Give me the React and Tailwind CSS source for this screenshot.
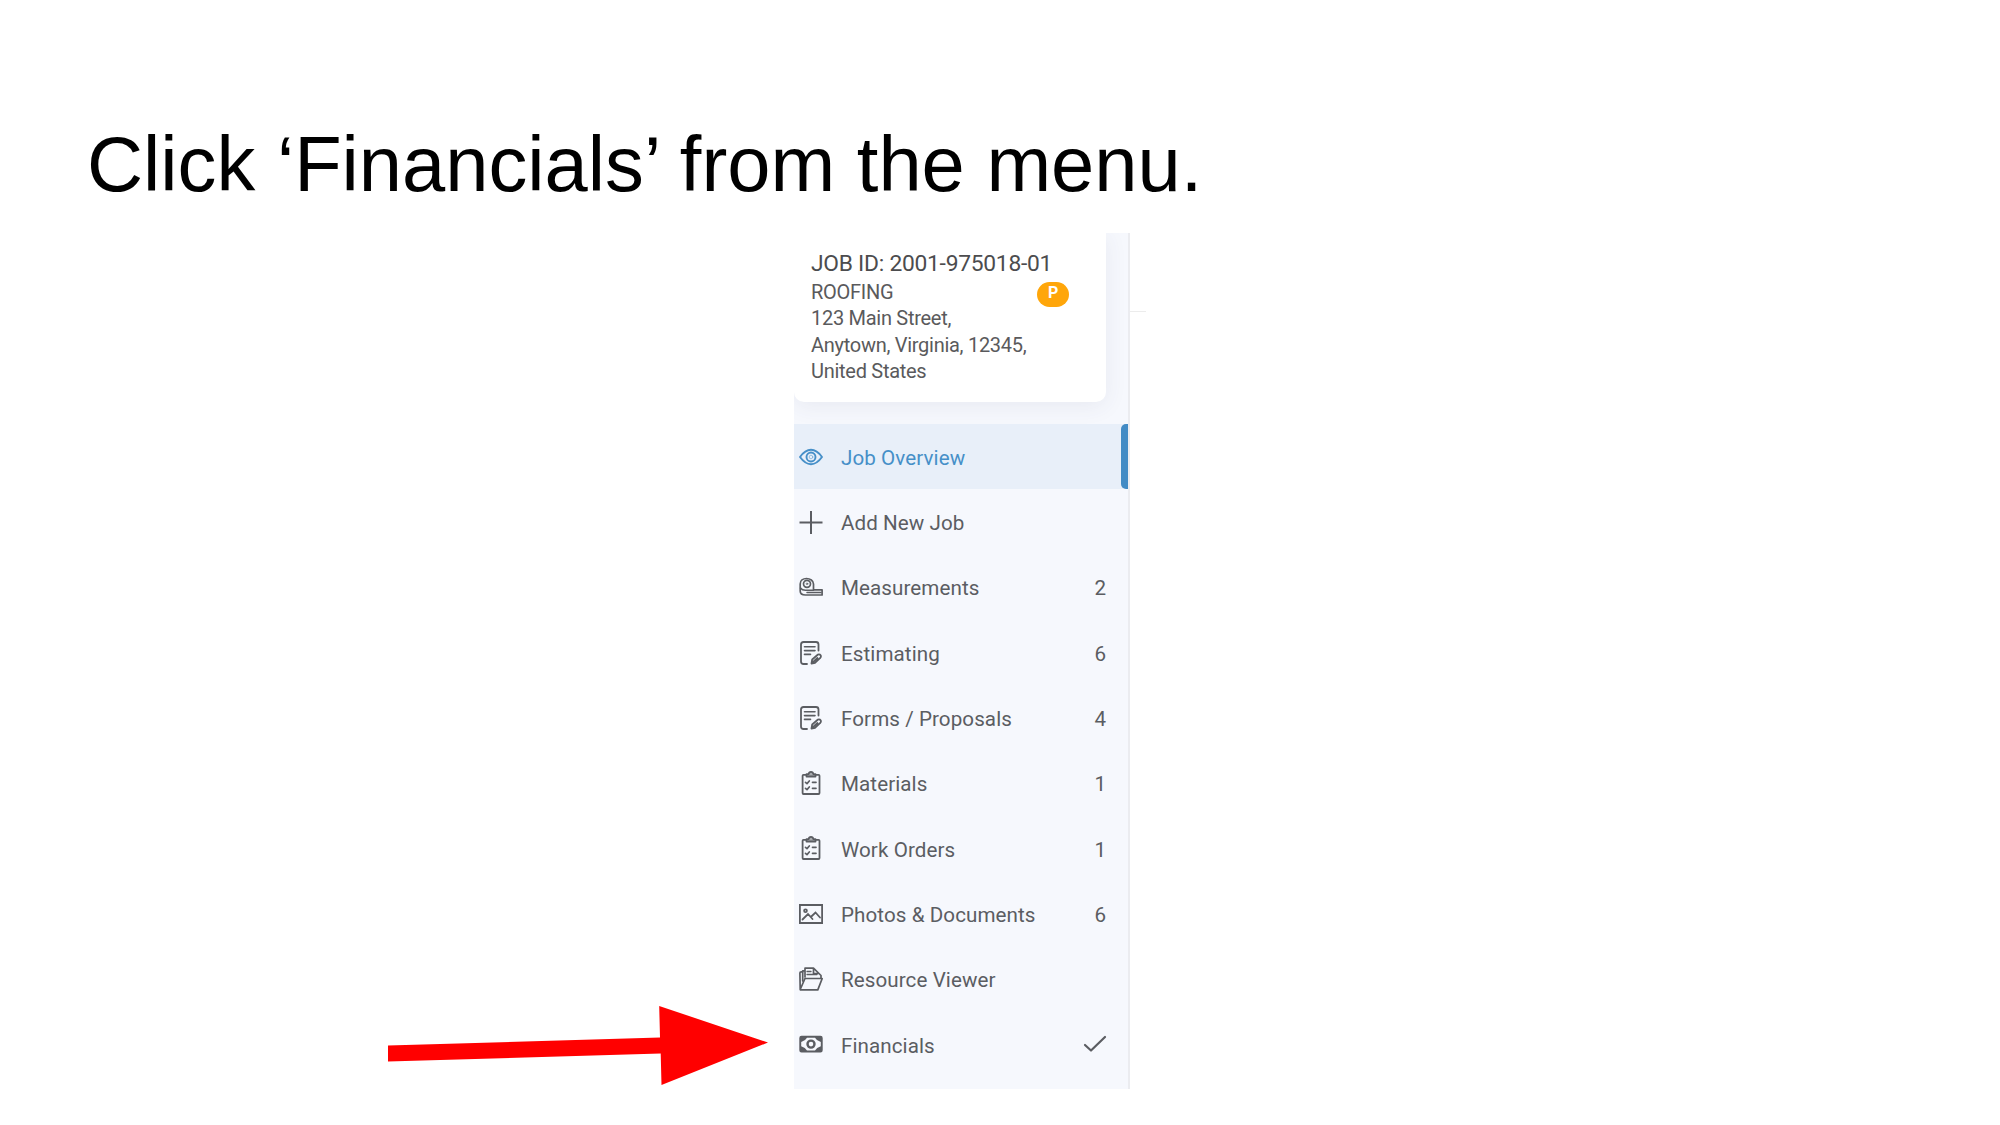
const stroke = { fill: "none", stroke: "currentColor", strokeWidth: 1.7, strokeLinecap: "round", strokeLinejoin: "round" };

function Icon({ children, ...rest }) {
  return (
    <svg viewBox="0 0 24 24" className="h-6 w-6 shrink-0" {...stroke} {...rest}>
      {children}
    </svg>
  );
}

const Eye = () => (
  <Icon strokeWidth="1.900">
    <path d="M1 12Q6.200 4.800 12 4.800T23 12Q17.800 19.200 12 19.200T1 12Z" />
    <circle cx="12" cy="12" r="4.500" />
    <circle cx="12" cy="12" r="1.800" strokeWidth=".8" strokeOpacity=".6" />
  </Icon>
);

const Plus = () => (
  <Icon strokeWidth="2" strokeLinecap="butt">
    <path d="M12 1v23M.5 12.500h23" />
  </Icon>
);

const Tape = () => (
  <Icon>
    <path d="M1.200 13.500V9C1.200 5.500 4 3.500 7.500 3.500S14.500 5.500 14.500 9v5.800h8.600V20H6.500C3.500 20 1.200 18.500 1.200 16Z" />
    <circle cx="8" cy="8.800" r="3.500" />
    <circle cx="8" cy="8.800" r=".8" strokeWidth=".8" />
    <path d="M1.500 13q1.500 2.200 5 2.200H14.500M8 17.500h14" strokeWidth="1.500" />
  </Icon>
);

const FormEdit = () => (
  <Icon strokeWidth="1.800">
    <path d="M8 23H4.500Q2 23 2 20.500V3.500Q2 1 4.500 1H17Q19.500 1 19.500 3.500V9.500" />
    <path d="M5.500 5.800H16M5.500 9.600H16M5.500 13.400H11.500" strokeWidth="1.600" />
    <path d="M12.500 22.500L13.200 18.500L19 13.500Q20.800 13 21.800 14.400Q22.500 16 21 17.200L16 21.800ZM13 22L18.500 17" />
  </Icon>
);

const Clipboard = () => (
  <Icon strokeWidth="1.800">
    <path d="M7 3.800H4.500Q3.600 3.800 3.600 4.700V22Q3.600 23 4.500 23H19.500Q20.500 23 20.500 22V4.700Q20.500 3.800 19.500 3.800H17" />
    <path d="M7.500 5.500V3.200H9.500Q10 .9 12 .9T14.500 3.200H16.500V5.500Z" fill="currentColor" fillOpacity=".5" />
    <path d="M6.500 11.300l1.500 1.300 2.300-2.600M13.500 11.300h3.500M6.500 17.300l1.500 1.300 2.300-2.600M13.500 17.300h3.500" strokeWidth="1.700" />
  </Icon>
);

const Photo = () => (
  <Icon strokeLinejoin="miter" strokeWidth="1.800">
    <path d="M.9 3H23.100V21H.9Z" />
    <circle cx="6.500" cy="8.800" r="1.400" />
    <path d="M3.500 17.500L9 12L13.500 17M11.800 15L16.500 10.500L21 15.500" />
  </Icon>
);

const Folder = () => (
  <Icon>
    <path d="M1.200 22.500L.9 6Q.9 4.800 2.200 4.800H3.500M1.200 22.500L6 11.500H23.200L18.800 22.900H1.500" />
    <path d="M3.700 14V3.800H6V1.200H14.500L22 8.500V11M14.500 1.200V6.500H19.500M6 4V10" />
    <path d="M8 4.500h4M8 7.500h10" strokeWidth="1.300" />
  </Icon>
);

const Cash = () => (
  <Icon stroke="none" fill="currentColor">
    <path
      fillRule="evenodd"
      d="M2.500 3.800H21.500Q23.700 3.800 23.700 6V18.200Q23.700 20.400 21.500 20.400H2.500Q.3 20.400 .3 18.200V6Q.3 3.800 2.500 3.800ZM8 5.800Q6.500 8.800 2.200 10V14.200Q6.500 15.400 8 18.400H16Q17.500 15.400 21.800 14.200V10Q17.500 8.800 16 5.800Z"
    />
    <circle cx="12" cy="12.100" r="3.500" fill="none" stroke="currentColor" strokeWidth="2.400" />
  </Icon>
);

const items = [
  { label: "Job Overview", icon: Eye, active: true },
  { label: "Add New Job", icon: Plus },
  { label: "Measurements", icon: Tape, count: 2 },
  { label: "Estimating", icon: FormEdit, count: 6 },
  { label: "Forms / Proposals", icon: FormEdit, count: 4 },
  { label: "Materials", icon: Clipboard, count: 1 },
  { label: "Work Orders", icon: Clipboard, count: 1 },
  { label: "Photos & Documents", icon: Photo, count: 6 },
  { label: "Resource Viewer", icon: Folder },
  { label: "Financials", icon: Cash, check: true },
];

function MenuItem({ label, icon: Glyph, count, check, active }) {
  return (
    <li
      className={
        active
          ? "relative flex h-[65.3px] items-center bg-[#e8eff9] pr-[22px] pl-[4.500px] text-[#468fc8]"
          : "flex h-[65.3px] items-center pr-[22px] pl-[4.500px] text-[#5b5d62]"
      }
    >
      <Glyph />
      <span className="ml-[18.500px] flex-1 pt-[2.500px] tracking-[0.08px] whitespace-nowrap">{label}</span>
      {count !== undefined && <span className="pt-[2.500px]">{count}</span>}
      {check && (
        <svg viewBox="0 0 24 18" className="-mr-px h-[18px] w-6" {...stroke} strokeWidth="2.200">
          <path d="M2 10L8 15.500L22 2" />
        </svg>
      )}
      {active && <span className="absolute inset-y-0 right-0 w-[7px] rounded-l-[5px] bg-[#428bc5]" />}
    </li>
  );
}

export default function App() {
  return (
    <main className="relative h-[1125px] w-[2000px] overflow-hidden bg-white">
      <h1 className="h-[233px] pt-[119px] pl-[87px] font-['Liberation_Sans',sans-serif] text-[77.7px] leading-[90px] whitespace-nowrap text-black">
        Click ‘Financials’ from the menu.
      </h1>
      <div className="ml-[794px] flex font-[Roboto,sans-serif]">
        <aside className="h-[856px] w-[336px] overflow-hidden border-r-2 border-[#ebecf0] bg-[#f6f8fd]">
          <section className="h-[169px] w-[312px] rounded-b-[10px] bg-white pt-4 pl-[17px] text-[20px] leading-[26.4px] tracking-[-0.28px] text-[#5a5a5c] shadow-[0_4px_22px_rgba(60,70,100,0.08)]">
            <h2 className="text-[22.8px] leading-[30px] tracking-[-0.26px] text-[#4c4c4e]">JOB ID: 2001-975018-01</h2>
            <div className="flex justify-between pr-[37px]">
              <p className="whitespace-nowrap">
                ROOFING
                <br />
                123 Main Street,
                <br />
                Anytown, Virginia, 12345,
                <br />
                United States
              </p>
              <span className="-ml-10 mt-[3px] flex h-[25px] w-8 shrink-0 justify-center rounded-full bg-[#ffa60a] text-base leading-[22px] font-bold text-white">
                P
              </span>
            </div>
          </section>
          <ul className="mt-[22px] text-[20.6px] leading-6">
            {items.map((item) => (
              <MenuItem key={item.label} {...item} />
            ))}
          </ul>
        </aside>
        <div className="mt-[78px] h-px w-4 bg-[#ececec]" />
      </div>
      <svg viewBox="0 0 382 80" className="absolute top-[1006px] left-[387px] h-[80px] w-[382px]">
        <path d="M1 39.500L273 31.500L272.200 0L381 36.500L274.500 79L273.700 47.500L1 55.500Z" fill="#ff0000" />
      </svg>
    </main>
  );
}
